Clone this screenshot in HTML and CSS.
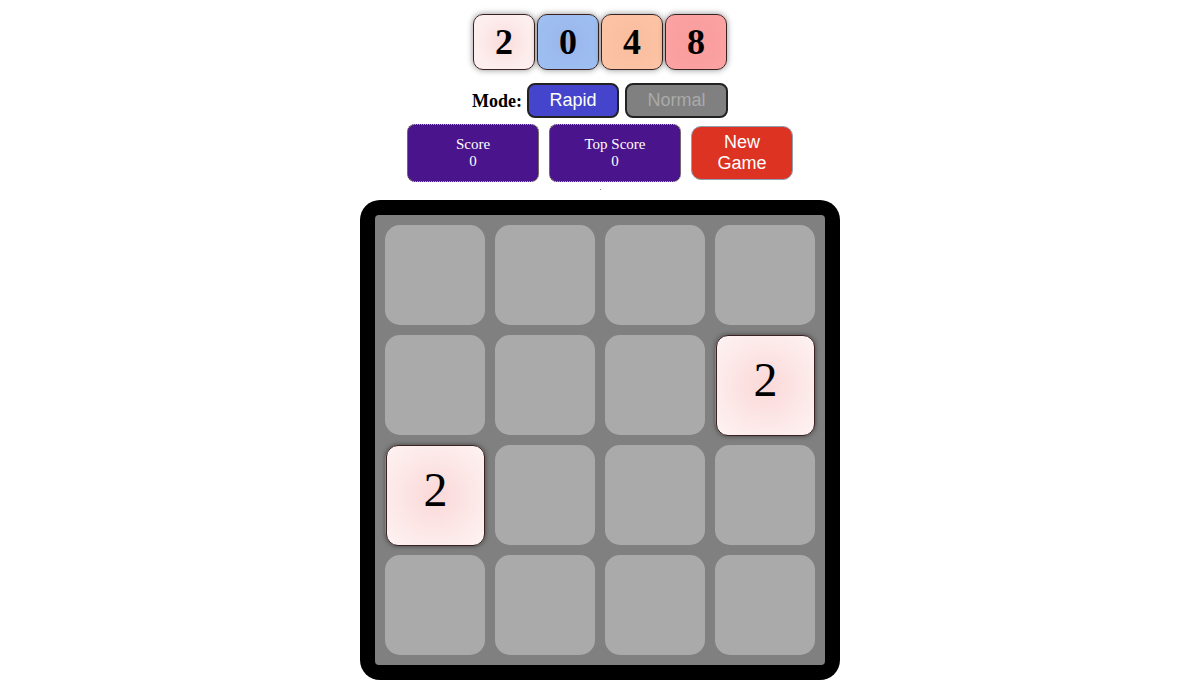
FILE: index.html
```html
<!DOCTYPE html>
<html>
<head>
<meta charset="utf-8">
<link rel="stylesheet" href="styles.css">
</head>
<body>
<div class="page">
  <div class="title">
    <div class="ttile t2">2</div>
    <div class="ttile t0">0</div>
    <div class="ttile t4">4</div>
    <div class="ttile t8">8</div>
  </div>
  <div class="mode-row">
    <span class="mode-label">Mode:</span>
    <button class="mode-btn rapid">Rapid</button>
    <button class="mode-btn normal">Normal</button>
  </div>
  <div class="score-row">
    <div class="score-box"><div>Score</div><div>0</div></div>
    <div class="score-box"><div>Top Score</div><div>0</div></div>
    <button class="new-game">New<br>Game</button>
  </div>
  <div class="dot"></div>
  <div class="board">
    <div class="grid">
      <div class="cell"></div><div class="cell"></div><div class="cell"></div><div class="cell"></div>
      <div class="cell"></div><div class="cell"></div><div class="cell"></div><div class="cell"><div class="tile">2</div></div>
      <div class="cell"><div class="tile">2</div></div><div class="cell"></div><div class="cell"></div><div class="cell"></div>
      <div class="cell"></div><div class="cell"></div><div class="cell"></div><div class="cell"></div>
    </div>
  </div>
</div>
</body>
</html>
```

FILE: styles.css
```css
html, body {
  margin: 0;
  padding: 0;
  background: #fff;
}
.page {
  display: flex;
  flex-direction: column;
  align-items: center;
  font-family: "Liberation Serif", serif;
}
.title {
  display: flex;
  gap: 2px;
  margin-top: 14px;
}
.ttile {
  box-sizing: border-box;
  width: 62px;
  height: 56px;
  border: 1px solid #3a2222;
  border-radius: 10px;
  box-shadow: 0 0 6px rgba(0,0,0,0.45);
  display: flex;
  align-items: center;
  justify-content: center;
  font-weight: bold;
  font-size: 36px;
  color: #000;
}
.t2 { background: radial-gradient(circle, #fbdcdc 0%, #fdeeee 70%, #fdf0f0 100%); }
.t0 { background: radial-gradient(circle, #9bb6ec 0%, #9ec0f2 100%); }
.t4 { background: radial-gradient(circle, #f9bd9d 0%, #fcc4a6 100%); }
.t8 { background: radial-gradient(circle, #f99c9c 0%, #fca3a3 100%); }

.mode-row {
  display: flex;
  align-items: center;
  margin-top: 13px;
  height: 35px;
}
.mode-label {
  font-weight: bold;
  font-size: 18px;
  margin-right: 5px;
  margin-top: 1px;
}
.mode-btn {
  box-sizing: border-box;
  height: 35px;
  border: 2px solid #222;
  border-radius: 8px;
  font-family: "Liberation Sans", Arial, sans-serif;
  font-size: 18px;
  padding: 0;
  margin: 0;
}
.rapid {
  width: 92px;
  background: #4444cc;
  color: #fff;
  margin-right: 6px;
}
.normal {
  width: 103px;
  background: #808080;
  color: #aaaaaa;
}

.score-row {
  display: flex;
  align-items: center;
  gap: 10px;
  margin-top: 6px;
}
.score-box {
  box-sizing: border-box;
  width: 132px;
  height: 58px;
  background: #4a148c;
  border: 1px dotted #a8b84a;
  border-radius: 8px;
  color: #fff;
  font-size: 15px;
  line-height: 17px;
  display: flex;
  flex-direction: column;
  align-items: center;
  justify-content: center;
  padding-bottom: 1px;
}
.new-game {
  box-sizing: border-box;
  width: 102px;
  height: 54px;
  background: #dd3322;
  border: 1px solid #8ea0b4;
  border-radius: 10px;
  color: #fff;
  font-family: "Liberation Sans", Arial, sans-serif;
  font-size: 18px;
  line-height: 21px;
  padding: 0;
}
.dot {
  width: 1px;
  height: 1px;
  background: #888;
  margin-top: 7px;
  margin-bottom: 10px;
}
.board {
  box-sizing: border-box;
  width: 480px;
  height: 480px;
  background: #000;
  border-radius: 20px;
  padding: 15px;
}
.grid {
  box-sizing: border-box;
  width: 450px;
  height: 450px;
  background: #808080;
  border-radius: 4px;
  padding: 10px;
  display: grid;
  grid-template-columns: repeat(4, 100px);
  grid-template-rows: repeat(4, 100px);
  gap: 10px;
}
.cell {
  background: #aaaaaa;
  border-radius: 15px;
  display: flex;
}
.tile {
  box-sizing: border-box;
  width: 101px;
  height: 101px;
  margin: 0 0 0 1px;
  border: 1px solid #3a2222;
  border-radius: 12px;
  background: radial-gradient(circle, #fbd8d8 0%, #fdeaea 65%, #fef3f3 100%);
  box-shadow: 0 0 5px rgba(0,0,0,0.5);
  display: flex;
  align-items: center;
  justify-content: center;
  font-size: 48px;
  padding-bottom: 12px;
  color: #000;
}
```
